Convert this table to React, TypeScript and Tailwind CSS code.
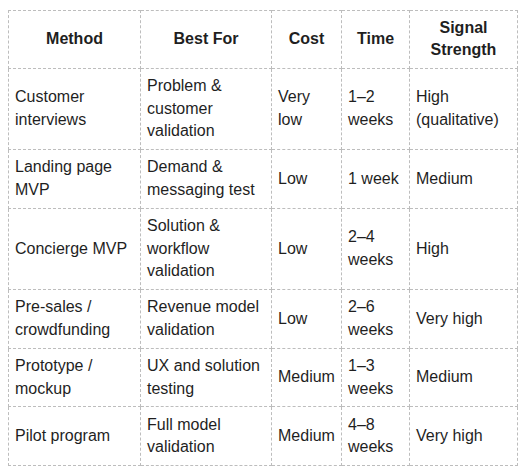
const rows = [
  ["Customer interviews", "Problem & customer validation", "Very low", "1–2 weeks", "High (qualitative)"],
  ["Landing page MVP", "Demand & messaging test", "Low", "1 week", "Medium"],
  ["Concierge MVP", "Solution & workflow validation", "Low", "2–4 weeks", "High"],
  ["Pre-sales / crowdfunding", "Revenue model validation", "Low", "2–6 weeks", "Very high"],
  ["Prototype / mockup", "UX and solution testing", "Medium", "1–3 weeks", "Medium"],
  ["Pilot program", "Full model validation", "Medium", "4–8 weeks", "Very high"],
]

const headers = ["Method", "Best For", "Cost", "Time", "Signal Strength"]
const widths = ["w-[132px]", "w-[131px]", "w-[70px]", "w-[68px]", "w-[108px]"]

export default function App() {
  return (
    <div className="bg-white min-h-[471px] pl-2 pt-[10px] font-['Liberation_Sans',Arial,sans-serif] text-[16px] leading-[1.4] text-[#1f1f1f]">
      <table className="table-fixed border-collapse w-[509px]">
        <colgroup>
          {widths.map((w, i) => (
            <col key={i} className={w} />
          ))}
        </colgroup>
        <thead>
          <tr>
            {headers.map(h => (
              <th key={h} className="border border-dashed border-[#bdbdbd] px-[6px] py-[6px] font-bold text-center align-middle">
                {h}
              </th>
            ))}
          </tr>
        </thead>
        <tbody>
          {rows.map((r, i) => (
            <tr key={i}>
              {r.map((c, j) => (
                <td key={j} className="border border-dashed border-[#bdbdbd] px-[6px] py-[6.5px] text-left align-middle">
                  {c}
                </td>
              ))}
            </tr>
          ))}
        </tbody>
      </table>
    </div>
  )
}
